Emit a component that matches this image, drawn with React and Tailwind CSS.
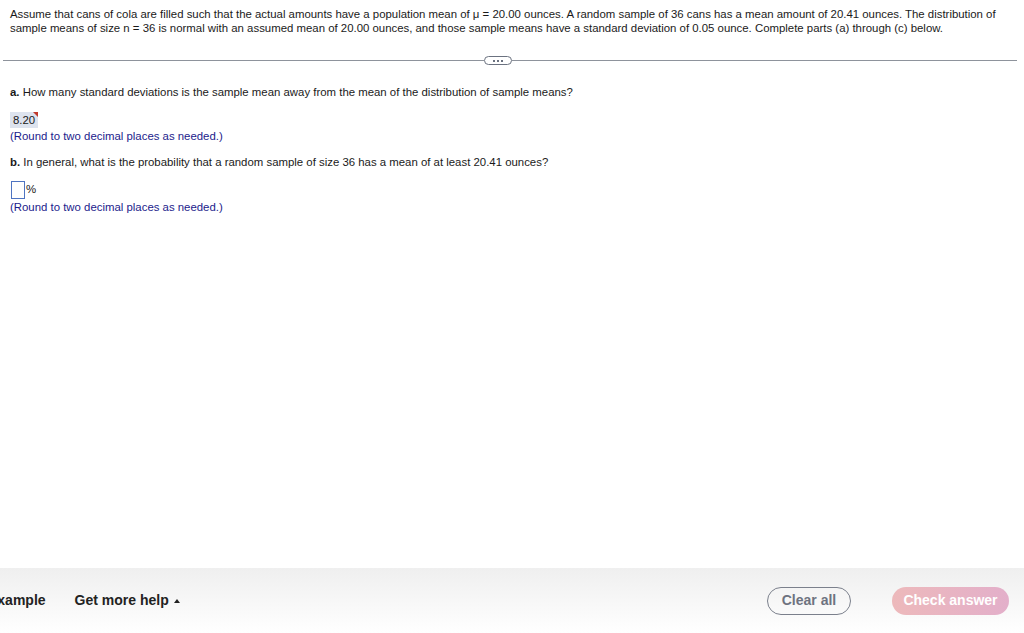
import React from 'react';

const Hint = ({ className = '' }) => (
  <div className={`text-[#1c1c8c] ${className}`}>(Round to two decimal places as needed.)</div>
);

const App = () => {
  return (
    <div className="h-screen w-full flex flex-col bg-white text-[#1a1a1a] overflow-hidden" style={{ fontFamily: '"Liberation Sans", Arial, sans-serif' }}>
      <div className="flex-1 text-[11.4px] leading-[14px]">
        <div className="px-[10px] pt-[7px] whitespace-nowrap">
          Assume that cans of cola are filled such that the actual amounts have a population mean of μ = 20.00 ounces. A random sample of 36 cans has a mean amount of 20.41 ounces. The distribution of
          <br />
          sample means of size n = 36 is normal with an assumed mean of 20.00 ounces, and those sample means have a standard deviation of 0.05 ounce. Complete parts (a) through (c) below.
        </div>

        <div className="flex items-center h-[9px] mt-[21px] ml-[3px] mr-[7px]">
          <div className="w-[481px] h-px bg-[#8e939c]" />
          <div className="w-[28px] h-[9px] rounded-full border border-[#6b7280] bg-white flex items-center justify-center gap-[2px]">
            <span className="w-[2px] h-[2px] bg-[#6b7280]" />
            <span className="w-[2px] h-[2px] bg-[#6b7280]" />
            <span className="w-[2px] h-[2px] bg-[#6b7280]" />
          </div>
          <div className="flex-1 h-px bg-[#8e939c]" />
        </div>

        <div className="px-[10px]">
          <div className="mt-[20px]">
            <span className="font-bold">a.</span> How many standard deviations is the sample mean away from the mean of the distribution of sample means?
          </div>
          <div className="mt-[13px] relative inline-flex items-center h-[16px] w-[28px] bg-[#dde3ee] pl-[3px]">
            8.20
            <span className="absolute top-0 right-0 w-0 h-0 border-t-[5px] border-t-[#c0392b] border-l-[5px] border-l-transparent" />
          </div>
          <Hint className="mt-[1px]" />
          <div className="mt-[12px]">
            <span className="font-bold">b.</span> In general, what is the probability that a random sample of size 36 has a mean of at least 20.41 ounces?
          </div>
          <div className="mt-[12px] flex items-start h-[18px]">
            <div className="ml-px w-[14px] h-[18px] border border-[#4f74c2] bg-white" />
            <span className="ml-[1px] leading-[16px]">%</span>
          </div>
          <Hint className="mt-[1px]" />
        </div>
      </div>

      <div className="h-[65px] bg-gradient-to-b from-[#efefef] to-white flex items-center text-[14px] font-bold text-[#222]">
        <span className="-ml-[12px]">Example</span>
        <span className="ml-[29px] flex items-center">
          Get more help
          <svg className="ml-[5px]" width="6" height="4" viewBox="0 0 6 4">
            <path d="M0 4 L3 0 L6 4 Z" fill="#222" />
          </svg>
        </span>
        <div className="flex-1" />
        <button className="h-[28px] w-[84px] rounded-full border-[1.5px] border-[#7b808c] text-[#6e7380] bg-transparent">
          Clear all
        </button>
        <button className="ml-[41px] mr-[15px] h-[28px] w-[117px] rounded-full bg-gradient-to-r from-[#edb9bb] to-[#e3afca] text-white">
          Check answer
        </button>
      </div>
    </div>
  );
};

export default App;
